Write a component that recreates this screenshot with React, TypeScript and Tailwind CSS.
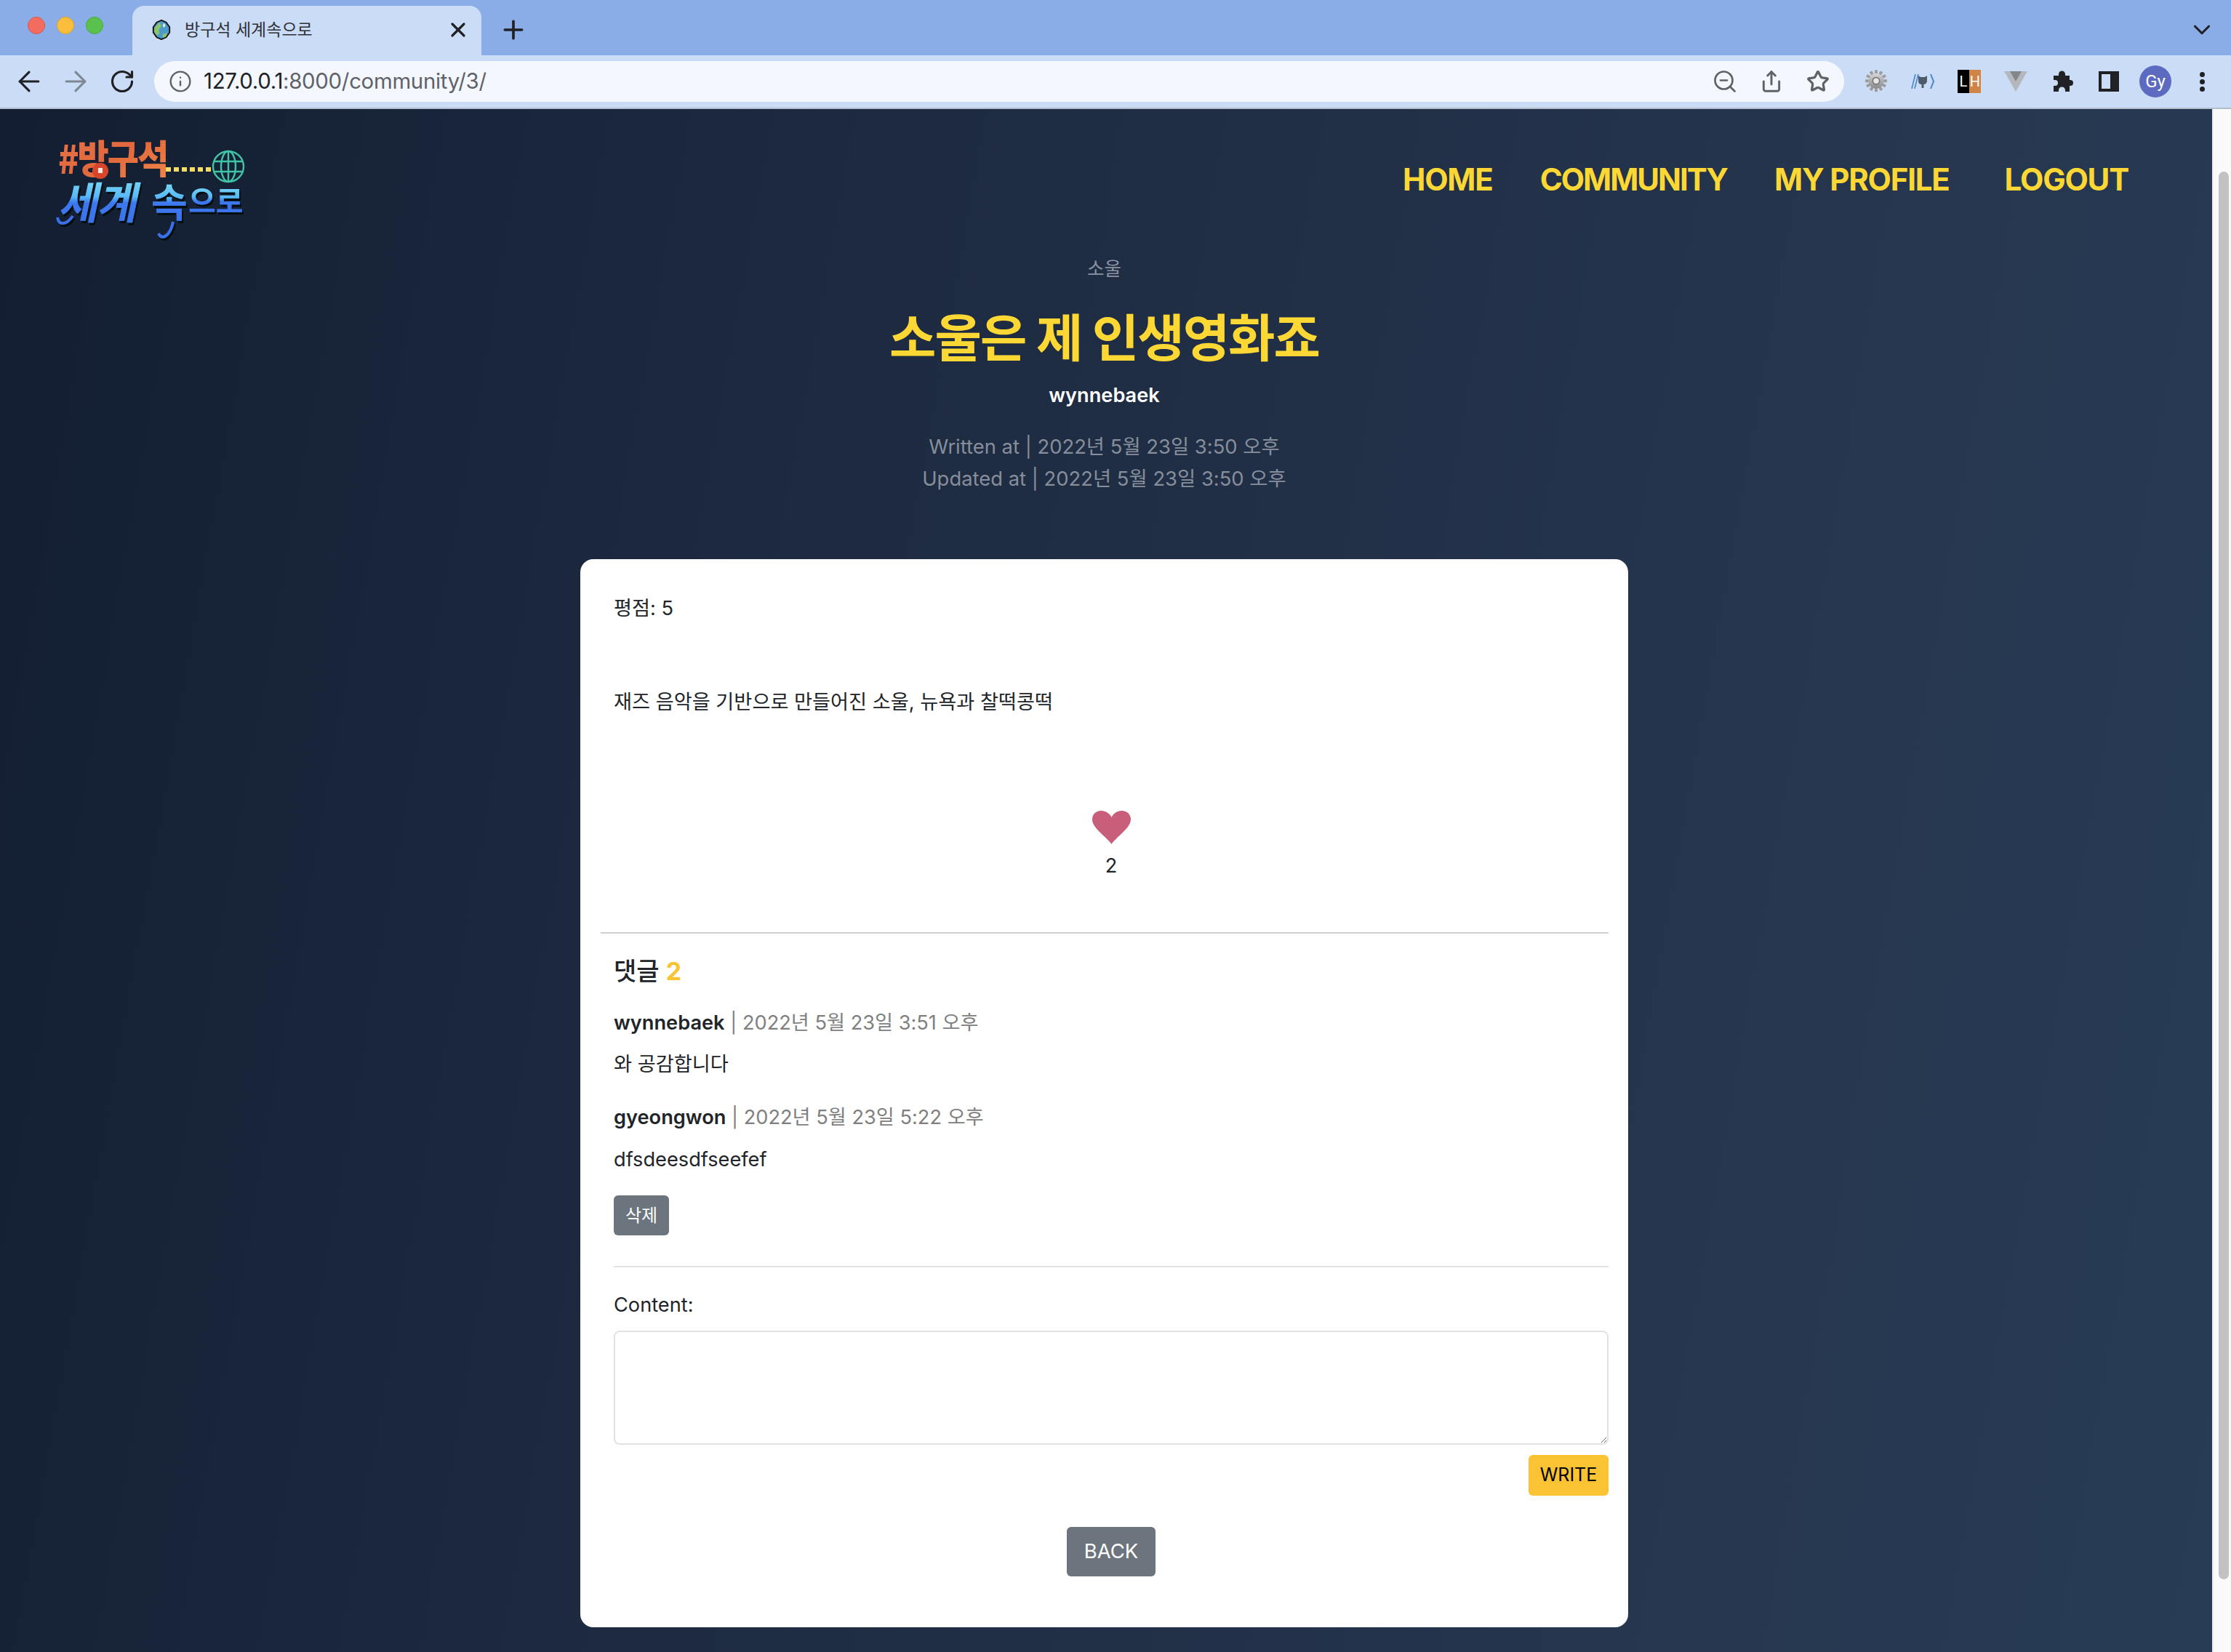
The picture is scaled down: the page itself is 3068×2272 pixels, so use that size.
import React from "react";
import { ArrowLeft, ArrowRight, RotateCw, Info, ZoomOut, Share, Star, X, Plus, ChevronDown } from "lucide-react";

const Box = ({ children }: { children: React.ReactNode }) => (
  <div className="flex h-[64px] w-[64px] shrink-0 items-center justify-center">{children}</div>
);

const Favicon = () => (
  <svg width="28" height="28" viewBox="0 0 30 30">
    <path d="M15 1 L22 4 L27 11 L27 19 L22 26 L15 29 L8 26 L3 19 L3 11 L8 4 Z" fill="#4f9ac9" stroke="#111" strokeWidth="2" />
    <path d="M5 12 L12 4 L15 9 L11 15 L12 21 L8 23 L4 17 Z" fill="#8cc46a" />
    <path d="M17 22 L23 19 L22 25 L17 27 Z" fill="#8cc46a" />
    <path d="M18 5 L21 8 L19 12 L17 9 Z" fill="#e8f3da" />
  </svg>
);

const Gear = () => (
  <svg width="30" height="32" viewBox="0 0 40 42">
    <defs>
      <linearGradient id="gearFill" x1="0" y1="0" x2="0" y2="1">
        <stop offset="0" stopColor="#d6d6d6" />
        <stop offset="1" stopColor="#8a8a8a" />
      </linearGradient>
    </defs>
    <g transform="translate(20 20)">
      {[0, 30, 60, 90, 120, 150, 180, 210, 240, 270, 300, 330].map((a) => (
        <rect key={a} x="-2.6" y="-20" width="5.2" height="8" rx="1" fill="#9c9c9c" transform={`rotate(${a})`} />
      ))}
      <circle r="14" fill="url(#gearFill)" />
      <circle r="7.5" fill="#7b7b7b" />
      <circle r="5" fill="#e6e6e6" />
    </g>
  </svg>
);

const OctoExt = () => (
  <svg width="32" height="22" viewBox="0 0 32 22">
    <path d="M6 1 L1 21 M10 1 L5 21" stroke="#4a86c8" strokeWidth="1.6" fill="none" />
    <path d="M27 1 L31 11 L27 21" stroke="#4a86c8" strokeWidth="2" fill="none" />
    <path d="M10 3 L13 5 H19 L22 3 V10 C22 14 19 15 17.5 15 V20 H14.5 V15 C12 15 10 14 10 10 Z" fill="#4d5b6c" />
  </svg>
);

const LH = () => (
  <div className="flex h-[32px] w-[32px] font-['Roboto',sans-serif] text-[20px] leading-[32px] text-white">
    <span className="w-[16px] bg-black text-center">L</span>
    <span className="w-[16px] bg-[#cf8448] text-center">H</span>
  </div>
);

const VueExt = () => (
  <svg width="32" height="28" viewBox="0 0 32 28">
    <path d="M0 0 H32 L16 28 Z" fill="#b4b8bd" />
    <path d="M8 0 H24 L16 14 Z" fill="#83878c" />
  </svg>
);

const PuzzleIcon = () => (
  <svg width="30" height="30" viewBox="0 0 30 30">
    <path d="M3 7 H10 V5 a4.5 4.5 0 0 1 9 0 V7 H25 V13 H26 a4 4 0 0 1 0 8 H25 V29 H19 V27 a4.5 4.5 0 0 0 -9 0 V29 H3 V21 H5 a4 4 0 0 0 0 -8 H3 Z" fill="#202124" />
  </svg>
);

const PanelIcon = () => (
  <div className="h-[28px] w-[28px] border-[4px] border-r-[12px] border-[#202124] bg-[#cbdcf6]" />
);

const Logo = () => (
  <svg width="262" height="134" viewBox="0 0 262 134" className="shrink-0 overflow-visible">
    <defs>
      <linearGradient id="logoOrange" x1="0" y1="0" x2="1" y2="1">
        <stop offset="0" stopColor="#e8734a" />
        <stop offset="0.5" stopColor="#e2683c" />
        <stop offset="1" stopColor="#ef8a4c" />
      </linearGradient>
      <linearGradient id="logoBlue" x1="0" y1="0" x2="0" y2="1">
        <stop offset="0" stopColor="#8ff0f5" />
        <stop offset="0.45" stopColor="#58b8f5" />
        <stop offset="0.55" stopColor="#3c78ee" />
        <stop offset="1" stopColor="#3a6fe8" />
      </linearGradient>
      <filter id="logoShadow" x="-10%" y="-10%" width="120%" height="130%">
        <feDropShadow dx="2" dy="3" stdDeviation="0.6" floodColor="#05080f" />
      </filter>
    </defs>
    <text x="2" y="38" transform="scale(1 1.15)" fontFamily="'Noto Sans CJK KR',sans-serif" fontWeight="900" fontSize="47" letterSpacing="-2" fill="url(#logoOrange)">#방구석</text>
    <circle cx="60" cy="40" r="11" fill="#d8452a" />
    <rect x="57" y="36" width="6" height="7" fill="#f7e9df" />
    <path d="M150 38 H212" stroke="#f7dd62" strokeWidth="6" strokeDasharray="7 4" />
    <g fill="none" stroke="#3fc5a6" strokeWidth="2.4">
      <ellipse cx="236" cy="34" rx="21" ry="21" />
      <ellipse cx="236" cy="34" rx="10" ry="21" />
      <path d="M236 13 V55 M216 27 H256 M216 41 H256" />
    </g>
    <g fontFamily="'Noto Sans CJK KR',sans-serif" fontWeight="700" filter="url(#logoShadow)">
      <text x="2" y="106" fontSize="60" letterSpacing="-2" transform="translate(22 0) skewX(-12)" fill="url(#logoBlue)">세계</text>
      <text x="130" y="104" fontSize="54" fill="url(#logoBlue)">속</text>
      <text x="181" y="97" fontSize="41" fill="url(#logoBlue)">으로</text>
      <path d="M1 104 C3 116 14 114 22 102" stroke="#3a6fe8" strokeWidth="4" fill="none" />
      <path d="M140 126 C144 136 156 130 160 110" stroke="#3a6fe8" strokeWidth="4" fill="none" />
    </g>
  </svg>
);

export default function App() {
  return (
    <div className="flex h-[2272px] w-[3068px] flex-col overflow-hidden font-['Inter','Noto_Sans_CJK_KR',sans-serif] text-[27.2px] text-[#212529]">
      {/* Tab strip */}
      <div className="flex h-[76px] shrink-0 items-end bg-[#8aace7]">
        <div className="flex h-[76px] w-[182px] shrink-0 items-center gap-[16px] pl-[38px] pb-[6px]">
          <span className="h-[24px] w-[24px] rounded-full border border-[#d9574c] bg-[#f26d60]" />
          <span className="h-[24px] w-[24px] rounded-full border border-[#dba531] bg-[#fbbe3c]" />
          <span className="h-[24px] w-[24px] rounded-full border border-[#4bab3e] bg-[#5ac24c]" />
        </div>
        <div className="flex h-[68px] w-[480px] shrink-0 items-center rounded-t-[16px] bg-[#cbdcf6] pb-[2px] pl-[26px]">
          <Favicon />
          <span className="ml-[18px] text-[23px] text-[#2f3136]">방구석 세계속으로</span>
          <span className="ml-auto mr-[16px] flex">
            <X size={32} strokeWidth={2.4} color="#202124" />
          </span>
        </div>
        <div className="flex h-[68px] w-[88px] shrink-0 items-center justify-center pb-[2px]">
          <Plus size={40} strokeWidth={2.2} color="#202124" />
        </div>
        <div className="flex h-[68px] flex-1 items-center justify-end pb-[2px] pr-[21px]">
          <ChevronDown size={38} strokeWidth={2} color="#202124" />
        </div>
      </div>

      {/* Toolbar */}
      <div className="flex h-[74px] shrink-0 items-center border-b-2 border-[#b3bccd] bg-[#cbdcf6] pl-[8px] pr-[8px]">
        <Box><ArrowLeft size={44} strokeWidth={1.7} color="#202124" /></Box>
        <Box><ArrowRight size={44} strokeWidth={1.7} color="#7e8794" /></Box>
        <Box><RotateCw size={36} strokeWidth={2.1} color="#202124" /></Box>
        <div className="ml-[12px] flex h-[56px] flex-1 items-center rounded-full bg-[#f4f8fe] pr-[4px]">
          <div className="flex w-[72px] shrink-0 justify-center">
            <Info size={32} strokeWidth={1.8} color="#5f6368" />
          </div>
          <span className="-ml-[4px] text-[29.4px] tracking-[-0.3px] text-[#202124]">
            127.0.0.1<span className="text-[#5f6368]">:8000/community/3/</span>
          </span>
          <div className="ml-auto flex">
            <Box><ZoomOut size={36} strokeWidth={1.8} color="#5f6368" /></Box>
            <Box><Share size={32} strokeWidth={2.2} color="#5f6368" /></Box>
            <Box><Star size={32} strokeWidth={2.4} color="#5f6368" /></Box>
          </div>
        </div>
        <div className="ml-[12px] flex">
          <Box><Gear /></Box>
          <Box><OctoExt /></Box>
          <Box><LH /></Box>
          <Box><VueExt /></Box>
          <Box><PuzzleIcon /></Box>
          <Box><PanelIcon /></Box>
          <Box>
            <div className="flex h-[44px] w-[44px] items-center justify-center rounded-full bg-[#5c6bc0] font-['Roboto',sans-serif] text-[24px] text-white">Gy</div>
          </Box>
          <Box>
            <div className="flex flex-col gap-[3px]">
              <span className="h-[7px] w-[7px] rounded-full bg-[#202124]" />
              <span className="h-[7px] w-[7px] rounded-full bg-[#202124]" />
              <span className="h-[7px] w-[7px] rounded-full bg-[#202124]" />
            </div>
          </Box>
        </div>
      </div>

      {/* Viewport */}
      <div className="flex min-h-0 flex-1">
        <main className="min-w-0 flex-1 overflow-hidden bg-[linear-gradient(100deg,#131e32_0%,#1d2a40_35%,#26374f_80%,#283c56_100%)]">
          <header className="flex h-[180px] items-start pl-[78px] pr-[115px] pt-[45px]">
            <Logo />
            <nav className="ml-auto mt-[26px] flex items-center text-[42px] font-bold leading-[52px] tracking-[-1.2px] text-[#fdd835]">
              <a>HOME</a>
              <a className="ml-[65px] tracking-[-2px]">COMMUNITY</a>
              <a className="ml-[65px]">MY PROFILE</a>
              <a className="ml-[76px]">LOGOUT</a>
            </nav>
          </header>

          <section className="flex flex-col items-center pr-[5px] text-center">
            <p className="mt-[22px] text-[25.6px] leading-[36px] text-[#8a93a1]">소울</p>
            <h1 className="mt-[30px] text-[70px] font-bold leading-[96px] tracking-[-2px] text-[#fdd835]">소울은 제 인생영화죠</h1>
            <p className="mt-[10px] text-[27.2px] font-semibold leading-[40px] text-white">wynnebaek</p>
            <div className="mt-[28px] text-[27.4px] leading-[44px] text-[#868e9c]">
              <p>Written at | 2022년 5월 23일 3:50 오후</p>
              <p>Updated at | 2022년 5월 23일 3:50 오후</p>
            </div>

            <article className="mt-[89px] flex w-[1441px] flex-col rounded-[18px] bg-white pb-[70px] pl-[46px] pr-[27px] text-left">
              <p className="mt-[48px] leading-[40px]">평점: 5</p>
              <p className="mt-[89px] leading-[40px]">재즈 음악을 기반으로 만들어진 소울, 뉴욕과 찰떡콩떡</p>
              <div className="mt-[129px] flex flex-col items-center">
                <svg width="53" height="46" viewBox="0 0 53 46">
                  <path d="M26.5 46 C20 36 0 24 0 12 C0 4 6 0 12.5 0 C19 0 24 4 26.5 9 C29 4 34 0 40.5 0 C47 0 53 4 53 12 C53 24 33 36 26.5 46Z" fill="#c95e7a" />
                </svg>
                <span className="mt-[10px] leading-[40px]">2</span>
              </div>
              <hr className="-ml-[18px] mt-[71px] border-t-2 border-[#d0d0d0]" />
              <h2 className="mt-[29px] text-[34px] font-medium leading-[46px]">
                댓글 <span className="font-bold text-[#f9c333]">2</span>
              </h2>
              <p className="mt-[28px] leading-[40px]">
                <b className="font-semibold">wynnebaek</b> <span className="text-[#808080]">| 2022년 5월 23일 3:51 오후</span>
              </p>
              <p className="mt-[17px] leading-[40px]">와 공감합니다</p>
              <p className="mt-[33px] leading-[40px]">
                <b className="font-semibold">gyeongwon</b> <span className="text-[#808080]">| 2022년 5월 23일 5:22 오후</span>
              </p>
              <p className="mt-[18px] leading-[40px]">dfsdeesdfseefef</p>
              <button className="mt-[29px] flex h-[55px] w-[76px] items-center justify-center rounded-[6px] bg-[#6c757d] text-[24px] text-white">삭제</button>
              <hr className="mt-[42px] border-t-2 border-[#e2e2e2]" />
              <label className="mt-[32px] leading-[40px]">Content:</label>
              <textarea className="mt-[15px] h-[157px] w-full rounded-[8px] border-2 border-[#e2e2e2] bg-white" />
              <div className="mt-[14px] flex justify-end">
                <button className="h-[56px] w-[110px] rounded-[6px] bg-[#f9c333] text-[25px] text-black">WRITE</button>
              </div>
              <div className="mt-[43px] flex justify-center">
                <button className="h-[68px] w-[122px] rounded-[6px] bg-[#6c757d] text-[27.5px] text-white">BACK</button>
              </div>
            </article>
          </section>
        </main>

        {/* Scrollbar */}
        <div className="w-[26px] shrink-0 border-l-2 border-[#ececec] bg-[#fafafa] pl-[7px] pt-[86px]">
          <div className="h-[1936px] w-[14px] rounded-full bg-[#c2c2c2]" />
        </div>
      </div>
    </div>
  );
}
